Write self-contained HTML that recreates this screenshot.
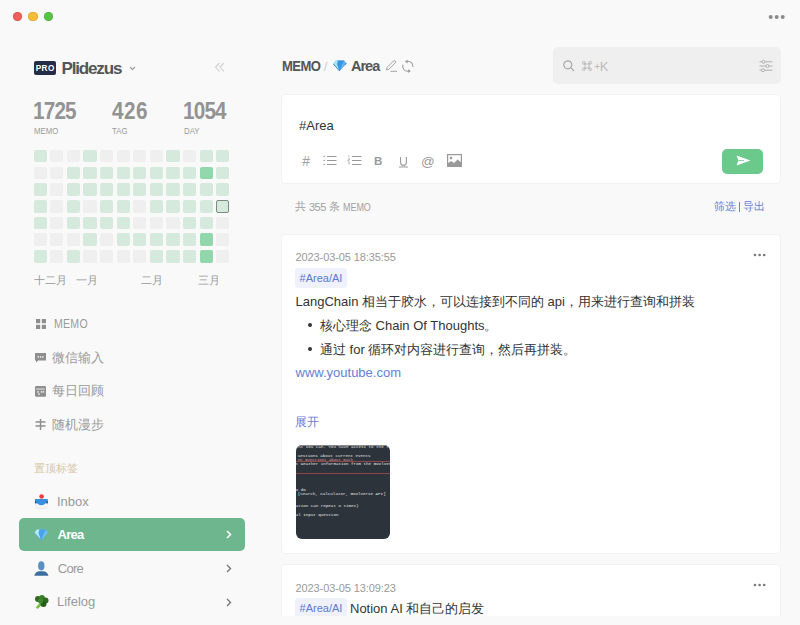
<!DOCTYPE html>
<html><head><meta charset="utf-8">
<style>
*{box-sizing:border-box;margin:0;padding:0}
html,body{width:800px;height:625px;overflow:hidden;background:#f9f9f9;font-family:"Liberation Sans",sans-serif}
.abs{position:absolute;white-space:nowrap;line-height:1}
svg.abs{overflow:visible}
.dot{position:absolute;width:9.5px;height:9.5px;border-radius:50%;top:11.5px}
.pro{left:34.2px;top:60.8px;width:21.6px;height:14px;background:#252c45;border-radius:2px;color:#fff;font-size:8.2px;font-weight:bold;line-height:16px;text-align:center;letter-spacing:0.4px;padding-left:0.4px}
.brand{left:61.5px;top:60px;font-size:17px;font-weight:bold;color:#555;letter-spacing:-1.15px}
.num{font-size:23px;font-weight:bold;color:#939393;letter-spacing:-0.9px;top:100px;transform:scaleX(0.9);transform-origin:0 0}
.lab{font-size:9.5px;color:#999;top:126px;transform:scaleX(0.82);transform-origin:0 0}
.cell{position:absolute;width:13.2px;height:12.6px;border-radius:2px;background:#efefef}
.g{background:#d5eadc}
.d{background:#92d7ab}
.t{border:1px solid #7c8a80;background:#d5eadc}
.month{font-size:11px;color:#999;top:274.5px}
.mi{position:absolute;font-size:13px;color:#999;white-space:nowrap;line-height:1}
.card{position:absolute;left:281px;width:499.6px;background:#fff;border-radius:4px;border:1px solid #f2f2f2}
.txt{font-size:13px;color:#333}
.tag{height:20.8px;padding:0 4.6px 0 4.6px;background:#eff2fc;border-radius:3px;font-size:11px;color:#5d78cc;line-height:21.5px}
.date{font-size:11px;color:#999;letter-spacing:-0.1px}
.chev{position:absolute;left:226px}
</style></head><body>
<!-- traffic lights -->
<div class="dot" style="left:12.5px;background:#ed5f58;box-shadow:inset 0 0 0 0.6px rgba(150,30,30,0.35)"></div>
<div class="dot" style="left:28px;background:#f4bb36;box-shadow:inset 0 0 0 0.6px rgba(160,110,20,0.35)"></div>
<div class="dot" style="left:43.7px;background:#55c443;box-shadow:inset 0 0 0 0.6px rgba(30,120,30,0.35)"></div>
<svg class="abs" style="left:766px;top:14px" width="20" height="6"><circle cx="4.7" cy="3" r="2" fill="#8a8a8a"/><circle cx="10.7" cy="3" r="2" fill="#8a8a8a"/><circle cx="16.7" cy="3" r="2" fill="#8a8a8a"/></svg>

<!-- brand -->
<div class="abs pro">PRO</div>
<div class="abs brand">Plidezus</div>
<svg class="abs" style="left:129px;top:66px" width="7" height="5"><path d="M1 1 L3.5 3.5 L6 1" stroke="#9a9a9a" stroke-width="1.1" fill="none"/></svg>
<svg class="abs" style="left:214px;top:62px" width="12" height="11"><path d="M5.5 1 L1.5 5 L5.5 9.5 M10 1 L6 5 L10 9.5" stroke="#cfcfcf" stroke-width="1.1" fill="none"/></svg>

<!-- stats -->
<div class="abs num" style="left:33px">1725</div>
<div class="abs num" style="left:111.5px;letter-spacing:0.6px">426</div>
<div class="abs num" style="left:183px">1054</div>
<div class="abs lab" style="left:34px">MEMO</div>
<div class="abs lab" style="left:111.5px">TAG</div>
<div class="abs lab" style="left:184px">DAY</div>

<!-- heatmap -->
<div class="cell g" style="left:33.6px;top:149.8px"></div>
<div class="cell" style="left:50.2px;top:149.8px"></div>
<div class="cell" style="left:66.8px;top:149.8px"></div>
<div class="cell g" style="left:83.4px;top:149.8px"></div>
<div class="cell" style="left:100.0px;top:149.8px"></div>
<div class="cell" style="left:116.6px;top:149.8px"></div>
<div class="cell" style="left:133.2px;top:149.8px"></div>
<div class="cell" style="left:149.8px;top:149.8px"></div>
<div class="cell g" style="left:166.4px;top:149.8px"></div>
<div class="cell" style="left:183.0px;top:149.8px"></div>
<div class="cell g" style="left:199.6px;top:149.8px"></div>
<div class="cell g" style="left:216.2px;top:149.8px"></div>
<div class="cell" style="left:33.6px;top:166.53px"></div>
<div class="cell" style="left:50.2px;top:166.53px"></div>
<div class="cell g" style="left:66.8px;top:166.53px"></div>
<div class="cell g" style="left:83.4px;top:166.53px"></div>
<div class="cell g" style="left:100.0px;top:166.53px"></div>
<div class="cell g" style="left:116.6px;top:166.53px"></div>
<div class="cell g" style="left:133.2px;top:166.53px"></div>
<div class="cell g" style="left:149.8px;top:166.53px"></div>
<div class="cell g" style="left:166.4px;top:166.53px"></div>
<div class="cell g" style="left:183.0px;top:166.53px"></div>
<div class="cell d" style="left:199.6px;top:166.53px"></div>
<div class="cell g" style="left:216.2px;top:166.53px"></div>
<div class="cell g" style="left:33.6px;top:183.26px"></div>
<div class="cell" style="left:50.2px;top:183.26px"></div>
<div class="cell g" style="left:66.8px;top:183.26px"></div>
<div class="cell g" style="left:83.4px;top:183.26px"></div>
<div class="cell g" style="left:100.0px;top:183.26px"></div>
<div class="cell g" style="left:116.6px;top:183.26px"></div>
<div class="cell g" style="left:133.2px;top:183.26px"></div>
<div class="cell g" style="left:149.8px;top:183.26px"></div>
<div class="cell g" style="left:166.4px;top:183.26px"></div>
<div class="cell g" style="left:183.0px;top:183.26px"></div>
<div class="cell g" style="left:199.6px;top:183.26px"></div>
<div class="cell g" style="left:216.2px;top:183.26px"></div>
<div class="cell g" style="left:33.6px;top:199.99px"></div>
<div class="cell" style="left:50.2px;top:199.99px"></div>
<div class="cell g" style="left:66.8px;top:199.99px"></div>
<div class="cell" style="left:83.4px;top:199.99px"></div>
<div class="cell g" style="left:100.0px;top:199.99px"></div>
<div class="cell g" style="left:116.6px;top:199.99px"></div>
<div class="cell" style="left:133.2px;top:199.99px"></div>
<div class="cell g" style="left:149.8px;top:199.99px"></div>
<div class="cell g" style="left:166.4px;top:199.99px"></div>
<div class="cell g" style="left:183.0px;top:199.99px"></div>
<div class="cell g" style="left:199.6px;top:199.99px"></div>
<div class="cell t" style="left:216.2px;top:199.99px"></div>
<div class="cell g" style="left:33.6px;top:216.72px"></div>
<div class="cell" style="left:50.2px;top:216.72px"></div>
<div class="cell g" style="left:66.8px;top:216.72px"></div>
<div class="cell g" style="left:83.4px;top:216.72px"></div>
<div class="cell g" style="left:100.0px;top:216.72px"></div>
<div class="cell g" style="left:116.6px;top:216.72px"></div>
<div class="cell" style="left:133.2px;top:216.72px"></div>
<div class="cell" style="left:149.8px;top:216.72px"></div>
<div class="cell" style="left:166.4px;top:216.72px"></div>
<div class="cell g" style="left:183.0px;top:216.72px"></div>
<div class="cell g" style="left:199.6px;top:216.72px"></div>
<div class="cell" style="left:216.2px;top:216.72px"></div>
<div class="cell" style="left:33.6px;top:233.45px"></div>
<div class="cell" style="left:50.2px;top:233.45px"></div>
<div class="cell" style="left:66.8px;top:233.45px"></div>
<div class="cell g" style="left:83.4px;top:233.45px"></div>
<div class="cell" style="left:100.0px;top:233.45px"></div>
<div class="cell g" style="left:116.6px;top:233.45px"></div>
<div class="cell g" style="left:133.2px;top:233.45px"></div>
<div class="cell g" style="left:149.8px;top:233.45px"></div>
<div class="cell g" style="left:166.4px;top:233.45px"></div>
<div class="cell g" style="left:183.0px;top:233.45px"></div>
<div class="cell d" style="left:199.6px;top:233.45px"></div>
<div class="cell" style="left:216.2px;top:233.45px"></div>
<div class="cell g" style="left:33.6px;top:250.18px"></div>
<div class="cell" style="left:50.2px;top:250.18px"></div>
<div class="cell g" style="left:66.8px;top:250.18px"></div>
<div class="cell" style="left:83.4px;top:250.18px"></div>
<div class="cell" style="left:100.0px;top:250.18px"></div>
<div class="cell" style="left:116.6px;top:250.18px"></div>
<div class="cell" style="left:133.2px;top:250.18px"></div>
<div class="cell g" style="left:149.8px;top:250.18px"></div>
<div class="cell g" style="left:166.4px;top:250.18px"></div>
<div class="cell g" style="left:183.0px;top:250.18px"></div>
<div class="cell d" style="left:199.6px;top:250.18px"></div>
<div class="cell" style="left:216.2px;top:250.18px"></div>

<div class="abs month" style="left:34px">十二月</div>
<div class="abs month" style="left:76px">一月</div>
<div class="abs month" style="left:141px">二月</div>
<div class="abs month" style="left:198px">三月</div>

<!-- menu -->
<svg class="abs" style="left:36px;top:319px" width="10" height="10"><rect x="0" y="0" width="4.2" height="4.2" fill="#8e8e8e"/><rect x="5.8" y="0" width="4.2" height="4.2" fill="#8e8e8e"/><rect x="0" y="5.8" width="4.2" height="4.2" fill="#8e8e8e"/><rect x="5.8" y="5.8" width="4.2" height="4.2" fill="#8e8e8e"/></svg>
<div class="mi" style="left:54.3px;top:318px;font-size:12px;letter-spacing:0.3px;transform:scaleX(0.88);transform-origin:0 0">MEMO</div>

<svg class="abs" style="left:35px;top:352.5px" width="11" height="10"><path d="M0 0 H11 V7.5 H3 L1 9.8 V7.5 H0 Z" fill="#8e8e8e"/><rect x="2.5" y="3.2" width="1.4" height="1.4" fill="#f9f9f9"/><rect x="4.8" y="3.2" width="1.4" height="1.4" fill="#f9f9f9"/><rect x="7.1" y="3.2" width="1.4" height="1.4" fill="#f9f9f9"/></svg>
<div class="mi" style="left:52px;top:350.5px">微信输入</div>

<svg class="abs" style="left:35px;top:386px" width="11" height="11"><rect x="0" y="0" width="11" height="10.8" rx="1.2" fill="#8e8e8e"/><rect x="1.2" y="2.6" width="8.6" height="0.9" fill="#f4f4f4"/><rect x="2.2" y="5.2" width="1.6" height="1.4" fill="#f4f4f4"/><rect x="5.8" y="5.2" width="1.6" height="1.4" fill="#f4f4f4"/><rect x="7.8" y="5.2" width="1.4" height="1.4" fill="#f4f4f4"/><rect x="3.2" y="7.4" width="1.6" height="1.4" fill="#f4f4f4"/></svg>
<div class="mi" style="left:52px;top:384px">每日回顾</div>

<svg class="abs" style="left:35px;top:419px" width="11" height="11"><rect x="0.5" y="2.2" width="10" height="1.5" fill="#8e8e8e"/><rect x="0.5" y="6.2" width="10" height="1.5" fill="#8e8e8e"/><rect x="4.8" y="0" width="1.5" height="11" fill="#8e8e8e"/></svg>
<div class="mi" style="left:52px;top:417.5px">随机漫步</div>

<div class="abs" style="left:34px;top:462.5px;font-size:11.2px;color:#d5c6a8">置顶标签</div>

<!-- inbox icon -->
<svg class="abs" style="left:34px;top:492.5px" width="15" height="16">
 <path d="M1.5 10 L2.4 15.2 H12.6 L13.5 10 Z" fill="#f7f7f7" stroke="#e2e2e2" stroke-width="0.6"/>
 <path d="M1 6.1 H13.8 V10.3 H11.6 Q10.2 12.3 7.4 12.3 Q4.6 12.3 3.2 10.3 H1 Z" fill="#3b8fe0"/>
 <rect x="1" y="8.2" width="1.3" height="2.1" fill="#1d4f88"/>
 <rect x="12.5" y="8.2" width="1.3" height="2.1" fill="#1d4f88"/>
 <circle cx="7.6" cy="3.5" r="2.3" fill="#ec3d45"/>
</svg>
<div class="mi" style="left:57px;top:495px">Inbox</div>

<div class="abs" style="left:19px;top:517.5px;width:225.5px;height:33px;background:#6db68e;border-radius:5px"></div>
<!-- diamond -->
<svg class="abs" style="left:34.3px;top:529px" width="15" height="12">
 <path d="M3 0.5 H12 L14 3.6 L7.2 11.4 L0.3 4 Z" fill="#6cc0f2"/>
 <path d="M0.3 4 L3 0.5 H5.4 L4.6 4.2 L7.2 11.4 Z" fill="#b4ecfc"/>
 <path d="M5.4 0.5 H12 L9.8 4.5 L7.2 11.4 L4.6 4.2 Z" fill="#4aa3ea"/>
 <path d="M0.5 4 L7.2 11.2" stroke="#3a7fb8" stroke-width="0.6" fill="none"/>
</svg>
<div class="mi" style="left:57.5px;top:528.3px;color:#fff;font-weight:bold;letter-spacing:-0.7px">Area</div>
<svg class="chev abs" style="top:530px" width="6" height="9"><path d="M1 1 L4.5 4.5 L1 8" stroke="#fff" stroke-width="1.5" fill="none"/></svg>

<!-- person -->
<svg class="abs" style="left:34px;top:561px" width="15" height="15">
 <ellipse cx="7.3" cy="4.8" rx="3.2" ry="4.6" fill="#5a8fc2"/>
 <path d="M0.3 14.8 Q1 11 5 10.2 H9.6 Q13.6 11 14.5 14.8 Z" fill="#3f6f9f"/>
</svg>
<div class="mi" style="left:57.7px;top:562px;letter-spacing:-0.7px">Core</div>
<svg class="chev abs" style="top:564px" width="6" height="9"><path d="M1 1 L4.5 4.5 L1 8" stroke="#777" stroke-width="1.4" fill="none"/></svg>

<!-- broccoli -->
<svg class="abs" style="left:34px;top:595px" width="15" height="14">
 <path d="M1.8 12.6 L6 7.6 L8.4 9.6 L3.6 14 Z" fill="#76c23e"/>
 <circle cx="4" cy="4" r="3" fill="#2f6a22"/>
 <circle cx="8" cy="2.8" r="2.8" fill="#3b7d2a"/>
 <circle cx="11.5" cy="5.5" r="3" fill="#2f6a22"/>
 <circle cx="9.5" cy="9" r="3" fill="#285c1c"/>
 <circle cx="6.5" cy="6" r="2.5" fill="#3f8a2e"/>
</svg>
<div class="mi" style="left:57px;top:595.3px">Lifelog</div>
<svg class="chev abs" style="top:598px" width="6" height="9"><path d="M1 1 L4.5 4.5 L1 8" stroke="#777" stroke-width="1.4" fill="none"/></svg>

<!-- main header -->
<div class="abs" style="left:282px;top:59px;font-size:14.5px;font-weight:bold;color:#555;letter-spacing:-0.6px;transform:scaleX(0.9);transform-origin:0 0">MEMO</div>
<div class="abs" style="left:323.8px;top:59.5px;font-size:13.5px;color:#cfcfcf">/</div>
<svg class="abs" style="left:333px;top:60px" width="14" height="12">
 <path d="M2.8 0.5 H11.2 L13.6 3.4 L6.6 11.2 L0.2 4 Z" fill="#5fb3ee"/>
 <path d="M0.2 4 L2.8 0.5 H5 L4.2 4.2 L6.6 11.2 Z" fill="#a6e6fa"/>
 <path d="M5 0.5 H11.2 L9 4.5 L6.6 11.2 L4.2 4.2 Z" fill="#3a96e4"/>
 <path d="M0.4 4 L6.6 11" stroke="#2b6ea8" stroke-width="0.7" fill="none"/>
 <path d="M13.4 3.2 L12 4.8" stroke="#2b6ea8" stroke-width="0.7" fill="none"/>
</svg>
<div class="abs" style="left:351px;top:59.2px;font-size:14.5px;font-weight:bold;color:#555;letter-spacing:-1px">Area</div>
<svg class="abs" style="left:385px;top:60px" width="13" height="12"><path d="M1.5 10 L2 7.5 L8.5 1 Q9.5 0.3 10.3 1.1 Q11 1.9 10.3 2.8 L3.8 9.4 Z" stroke="#9a9a9a" stroke-width="0.9" fill="none"/><path d="M5.5 11.3 H12" stroke="#9a9a9a" stroke-width="0.9"/></svg>
<svg class="abs" style="left:402px;top:59.5px" width="12" height="13"><path d="M5 1.3 A5 5 0 0 1 10.9 7" stroke="#9a9a9a" stroke-width="1.1" fill="none"/><path d="M2.9 1.6 L5.6 -0.3 L5.6 3.4 Z" fill="#9a9a9a"/><path d="M0.9 4.6 A5 5 0 0 0 6.6 11.1" stroke="#9a9a9a" stroke-width="1.1" fill="none"/><path d="M8.9 11 L6.1 9.2 L6.1 12.9 Z" fill="#9a9a9a"/></svg>

<!-- search -->
<div class="abs" style="left:552.6px;top:46.6px;width:228px;height:37.2px;background:#efefef;border-radius:5px"></div>
<svg class="abs" style="left:563px;top:59.5px" width="12" height="12"><circle cx="4.8" cy="4.8" r="4" stroke="#aaa" stroke-width="1.2" fill="none"/><path d="M7.7 7.7 L11 11" stroke="#aaa" stroke-width="1.2"/></svg>
<svg class="abs" style="left:582.2px;top:61px" width="10" height="10"><path d="M3 1.7 V8.3 M7 1.7 V8.3 M1.7 3 H8.3 M1.7 7 H8.3" stroke="#b5b5b5" stroke-width="0.9" fill="none"/><circle cx="1.7" cy="1.7" r="1.3" stroke="#b5b5b5" stroke-width="0.9" fill="none"/><circle cx="8.3" cy="1.7" r="1.3" stroke="#b5b5b5" stroke-width="0.9" fill="none"/><circle cx="1.7" cy="8.3" r="1.3" stroke="#b5b5b5" stroke-width="0.9" fill="none"/><circle cx="8.3" cy="8.3" r="1.3" stroke="#b5b5b5" stroke-width="0.9" fill="none"/></svg>
<div class="abs" style="left:594.2px;top:60.2px;font-size:13px;color:#bbb;letter-spacing:-0.3px"><span style="font-size:10px;position:relative;top:-1px">+</span>K</div>
<svg class="abs" style="left:759px;top:59.5px" width="14" height="12">
 <path d="M0.5 1.8 H3 M6 1.8 H13.5 M0.5 6 H7 M10 6 H13.5 M0.5 10.2 H2.5 M5.5 10.2 H13.5" stroke="#aaa" stroke-width="0.9"/>
 <circle cx="4.5" cy="1.8" r="1.5" stroke="#aaa" stroke-width="0.9" fill="none"/>
 <circle cx="8.5" cy="6" r="1.5" stroke="#aaa" stroke-width="0.9" fill="none"/>
 <circle cx="4" cy="10.2" r="1.5" stroke="#aaa" stroke-width="0.9" fill="none"/>
</svg>

<!-- editor -->
<div class="card" style="top:94.3px;height:89.4px"></div>
<div class="abs txt" style="left:299px;top:119px;font-size:13px;color:#333">#Area</div>
<div class="abs" style="left:302px;top:153.5px;font-size:14px;color:#a0a0a0;font-style:italic">#</div>
<svg class="abs" style="left:323px;top:155px" width="14" height="11"><path d="M4 1.5 H13.5 M4 5.5 H13.5 M4 9.5 H13.5" stroke="#999" stroke-width="1"/><circle cx="1.2" cy="1.5" r="0.8" fill="#999"/><circle cx="1.2" cy="5.5" r="0.8" fill="#999"/><circle cx="1.2" cy="9.5" r="0.8" fill="#999"/></svg>
<svg class="abs" style="left:348px;top:155px" width="14" height="11"><path d="M4 1.5 H13.5 M4 5.5 H13.5 M4 9.5 H13.5" stroke="#999" stroke-width="1"/><path d="M0.8 0 V2.2 M0 3.8 H1.5 V5 H0 V6.2 H1.5 M0 7.8 H1.5 V8.9 H0.3" stroke="#999" stroke-width="0.6" fill="none"/></svg>
<div class="abs" style="left:374px;top:155.5px;font-size:11.5px;font-weight:bold;color:#999">B</div>
<svg class="abs" style="left:398.5px;top:156.5px" width="10" height="12"><path d="M1.6 0 V5.3 Q1.6 8.4 4.5 8.4 Q7.4 8.4 7.4 5.3 V0" stroke="#999" stroke-width="1.1" fill="none"/><path d="M0 10 H9" stroke="#999" stroke-width="1"/></svg>
<div class="abs" style="left:421px;top:154.5px;font-size:13.5px;color:#999">@</div>
<svg class="abs" style="left:447px;top:154px" width="15" height="13"><rect x="0.6" y="0.6" width="13.8" height="11.8" stroke="#999" stroke-width="1.2" fill="none"/><circle cx="4" cy="4" r="1.3" fill="#999"/><path d="M0.6 12.4 V9.5 L4 7 L7 9 L10.5 5.5 L14.4 8.5 V12.4 Z" fill="#999"/></svg>

<div class="abs" style="left:722px;top:148.5px;width:41px;height:25px;background:#6bc98b;border-radius:5px"></div>
<svg class="abs" style="left:736px;top:155px" width="15" height="11"><path d="M0.5 0.5 L14.5 5.5 L0.5 10.5 L2.5 5.5 Z" fill="#fff"/><path d="M2.5 5.5 H8" stroke="#6bc98b" stroke-width="0.8"/></svg>

<div class="abs" style="left:295px;top:201px;font-size:11px;color:#a0a0a0">共</div><div class="abs" style="left:309px;top:201.5px;font-size:11px;color:#a0a0a0;letter-spacing:-0.5px">355</div><div class="abs" style="left:329px;top:201px;font-size:11px;color:#a0a0a0">条</div><div class="abs" style="left:343px;top:202px;font-size:10.5px;color:#a0a0a0;transform:scaleX(0.85);transform-origin:0 0">MEMO</div>
<div class="abs" style="left:713.8px;top:201.3px;font-size:11px;color:#6580d6">筛选</div><div class="abs" style="left:738.6px;top:202px;width:1.3px;height:9.5px;background:#6580d6"></div><div class="abs" style="left:742.6px;top:201.3px;font-size:11px;color:#6580d6">导出</div>

<!-- memo 1 -->
<div class="card" style="top:234.3px;height:319.4px"></div>
<div class="abs date" style="left:295.5px;top:251.5px">2023-03-05 18:35:55</div>
<svg class="abs" style="left:753px;top:253px" width="14" height="4"><circle cx="2" cy="2" r="1.3" fill="#777"/><circle cx="6.6" cy="2" r="1.3" fill="#777"/><circle cx="11.2" cy="2" r="1.3" fill="#777"/></svg>
<div class="abs tag" style="left:295px;top:267.5px">#Area/AI</div>
<div class="abs txt" style="left:295.5px;top:295px">LangChain 相当于胶水，可以连接到不同的 api，用来进行查询和拼装</div>
<div class="abs" style="left:308px;top:323.3px;width:4px;height:4px;border-radius:50%;background:#333"></div>
<div class="abs txt" style="left:320px;top:319px">核心理念 Chain Of Thoughts。</div>
<div class="abs" style="left:308px;top:346.8px;width:4px;height:4px;border-radius:50%;background:#333"></div>
<div class="abs txt" style="left:320px;top:343px">通过 for 循环对内容进行查询，然后再拼装。</div>
<div class="abs txt" style="left:295.5px;top:366px;color:#6580d6">www.youtube.com</div>
<div class="abs txt" style="left:295px;top:416.5px;font-size:11.5px;color:#6580d6">展开</div>

<div class="abs" style="left:295.7px;top:444.8px;width:94.2px;height:94.6px;background:#2d333b;border-radius:6px;overflow:hidden">
 <div style="position:absolute;left:0;top:0;width:100%;height:1px;background:#888"></div>
 <div style="position:absolute;left:0;top:0;width:100%;height:3px;font-family:'Liberation Mono';font-size:4.2px;color:#e4e4e4;line-height:4px;overflow:hidden">ent you can. You have access to the followi</div>
 <div style="position:absolute;left:2px;top:9.3px;font-family:'Liberation Mono';font-size:4.2px;color:#e4e4e4;line-height:4px">uestions about current events</div>
 <div style="position:absolute;left:2px;top:13.2px;font-family:'Liberation Mono';font-size:4px;color:#d99;line-height:4px">en questions about math</div>
 <div style="position:absolute;left:0;top:15.8px;width:100%;height:0.9px;background:#8f4646"></div>
 <div style="position:absolute;left:0;top:17px;font-family:'Liberation Mono';font-size:4.2px;color:#e4e4e4;line-height:4px">t weather information from the Goolverse API</div>
 <div style="position:absolute;left:0;top:28.2px;width:100%;height:1px;background:#8f4646"></div>
 <div style="position:absolute;left:0;top:43px;font-family:'Liberation Mono';font-size:4.2px;color:#e4e4e4;line-height:4px">o do</div>
 <div style="position:absolute;left:2px;top:47px;font-family:'Liberation Mono';font-size:4.2px;color:#e4e4e4;line-height:4px">[Search, Calculator, Goolverse API]</div>
 <div style="position:absolute;left:0;top:59px;font-family:'Liberation Mono';font-size:4.2px;color:#e4e4e4;line-height:4px">ation can repeat N times)</div>
 <div style="position:absolute;left:0;top:68px;font-family:'Liberation Mono';font-size:4.2px;color:#e4e4e4;line-height:4px">al input question</div>
</div>

<!-- memo 2 -->
<div class="abs" style="left:0;top:563.5px;width:800px;height:52px;overflow:hidden">
 <div class="card" style="top:0;height:80px"></div>
 <div class="abs date" style="left:295.5px;top:19px">2023-03-05 13:09:23</div>
 <svg class="abs" style="left:753px;top:19.3px" width="14" height="4"><circle cx="2" cy="2" r="1.3" fill="#777"/><circle cx="6.6" cy="2" r="1.3" fill="#777"/><circle cx="11.2" cy="2" r="1.3" fill="#777"/></svg>
 <div class="abs tag" style="left:295px;top:34px">#Area/AI</div>
 <div class="abs txt" style="left:350px;top:38px">Notion AI 和自己的启发</div>
</div>


</body></html>
